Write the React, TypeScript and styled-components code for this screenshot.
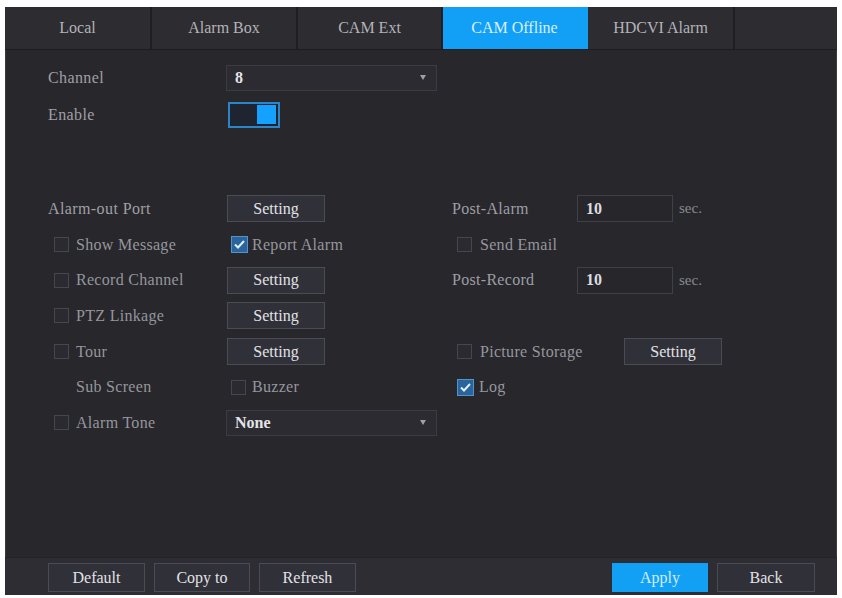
import React from "react";
import styled, { createGlobalStyle, css } from "styled-components";

const Global = createGlobalStyle`
  html, body { margin: 0; padding: 0; background: #ffffff; }
  body { font-family: "Liberation Serif", "Times New Roman", serif; }
`;

const Panel = styled.div`
  margin: 7px 0 0 5px;
  width: 832px;
  height: 588px;
  background: #27272c;
  display: flex;
  flex-direction: column;
  box-shadow: inset 0 0 0 1px #3a3a40;
`;

const TabBar = styled.div`
  display: flex;
  height: 42px;
  background: #2c2c31;
  border-bottom: 1px solid #1d1d21;
  flex: 0 0 auto;
`;

const Tab = styled.div<{ $active?: boolean; $w: number }>`
  width: ${(p) => p.$w}px;
  display: flex;
  align-items: center;
  justify-content: center;
  font-size: 16px;
  color: #b3b3b8;
  border-right: 2px solid #1f1f23;
  box-sizing: border-box;
  ${(p) =>
    p.$active &&
    css`
      background: #11a0f6;
      color: #dcefff;
      border-right-color: #11a0f6;
    `}
`;

const Filler = styled.div`
  flex: 1;
`;

const Content = styled.div`
  flex: 1;
  padding: 9px 0 0 43px;
`;

const FormGrid = styled.div`
  display: grid;
  grid-template-columns: 178px 226px 1fr;
  grid-template-rows: 37px 37px 58px repeat(7, 35.7px);
  align-items: center;
`;

const Label = styled.div`
  font-size: 16px;
  letter-spacing: 0.4px;
  color: #a0a0a6;
`;

const Cell = styled.div<{ $offset?: number }>`
  display: flex;
  align-items: center;
  padding-left: ${(p) => p.$offset ?? 0}px;
`;

const Spacer = styled.div`
  grid-column: 1 / -1;
`;

const Select = styled.div<{ $w: number }>`
  width: ${(p) => p.$w}px;
  height: 26px;
  box-sizing: border-box;
  background: #2b2b31;
  border: 1px solid #3b3b43;
  display: flex;
  align-items: center;
  justify-content: space-between;
  padding: 0 8px 0 8px;
  font-size: 16px;
  font-weight: bold;
  color: #e4e4e8;
`;

const Arrow = styled.span`
  width: 0;
  height: 0;
  border-left: 3.5px solid transparent;
  border-right: 3.5px solid transparent;
  border-top: 5px solid #9fa0a6;
  margin-right: 2px;
`;

const Toggle = styled.div`
  margin-left: 2px;
  width: 52px;
  height: 26px;
  box-sizing: border-box;
  border: 2px solid #2a86c8;
  background: #1f2530;
  display: flex;
  justify-content: flex-end;
  align-items: center;
  padding-right: 2px;
`;

const Knob = styled.div`
  width: 19px;
  height: 19px;
  background: #14a1ff;
`;

const Button = styled.div<{ $w?: number; $primary?: boolean }>`
  width: ${(p) => p.$w ?? 98}px;
  height: 27px;
  box-sizing: border-box;
  display: flex;
  align-items: center;
  justify-content: center;
  font-size: 16px;
  color: #e2e2e6;
  background: #303038;
  border: 1px solid #4a4b54;
  ${(p) =>
    p.$primary &&
    css`
      background: #12a0f5;
      border-color: #12a0f5;
      color: #d2ecff;
    `}
`;

const Box = styled.span<{ $checked?: boolean; $hidden?: boolean }>`
  width: 15px;
  height: 15px;
  box-sizing: border-box;
  border: 1px solid #46464e;
  background: #2a2a30;
  display: inline-flex;
  align-items: center;
  justify-content: center;
  flex: 0 0 auto;
  visibility: ${(p) => (p.$hidden ? "hidden" : "visible")};
  ${(p) =>
    p.$checked &&
    css`
      width: 17px;
      height: 17px;
      background: #2a649c;
      border-color: #5592c8;
    `}
`;

const CheckLabel = styled.span<{ $gap: number }>`
  margin-left: ${(p) => p.$gap}px;
  font-size: 16px;
  letter-spacing: 0.3px;
  color: #96969c;
`;

const Input = styled.div`
  width: 96px;
  height: 27px;
  box-sizing: border-box;
  background: #26262b;
  border: 1px solid #404048;
  display: flex;
  align-items: center;
  padding-left: 8px;
  font-size: 16px;
  font-weight: bold;
  color: #dcdce0;
`;

const Unit = styled.span`
  margin-left: 6px;
  font-size: 15px;
  color: #8a8a90;
`;

const RightLabel = styled.span`
  width: 125px;
  font-size: 16px;
  letter-spacing: 0.3px;
  color: #9e9ea4;
`;

const Footer = styled.div`
  flex: 0 0 auto;
  height: 38px;
  box-sizing: border-box;
  background: #2d2d33;
  border-top: 1px solid #232328;
  display: flex;
  align-items: flex-start;
  padding: 5px 22px 0 43px;
`;

const FooterGroup = styled.div<{ $gap: number }>`
  display: flex;
  gap: ${(p) => p.$gap}px;
`;

const FooterButton = styled(Button)`
  height: 29px;
`;

const CheckGroup = styled.div<{ $w?: number }>`
  display: flex;
  align-items: center;
  width: ${(p) => (p.$w ? `${p.$w}px` : "auto")};
`;

type CheckProps = {
  label: string;
  checked?: boolean;
  hidden?: boolean;
  gap?: number;
};

const Check: React.FC<CheckProps> = ({ label, checked, hidden, gap = 7 }) => (
  <>
    <Box $checked={checked} $hidden={hidden}>
      {checked && (
        <svg width="11" height="9" viewBox="0 0 11 9">
          <path d="M1 4.5 L4 7.5 L10 1" fill="none" stroke="#e0effc" strokeWidth="2" />
        </svg>
      )}
    </Box>
    <CheckLabel $gap={gap}>{label}</CheckLabel>
  </>
);

const tabs = [
  { name: "Local", w: 147 },
  { name: "Alarm Box", w: 146 },
  { name: "CAM Ext", w: 145 },
  { name: "CAM Offline", w: 145, active: true },
  { name: "HDCVI Alarm", w: 147 },
];

export default function App() {
  return (
    <>
      <Global />
      <Panel>
        <TabBar>
          {tabs.map((t) => (
            <Tab key={t.name} $w={t.w} $active={t.active}>
              {t.name}
            </Tab>
          ))}
          <Filler />
        </TabBar>
        <Content>
          <FormGrid>
            <Label>Channel</Label>
            <Cell>
              <Select $w={211}>
                <span>8</span>
                <Arrow />
              </Select>
            </Cell>
            <div />

            <Label>Enable</Label>
            <Cell>
              <Toggle>
                <Knob />
              </Toggle>
            </Cell>
            <div />

            <Spacer />

            <Label>Alarm-out Port</Label>
            <Cell $offset={1}>
              <Button>Setting</Button>
            </Cell>
            <Cell>
              <RightLabel>Post-Alarm</RightLabel>
              <Input>10</Input>
              <Unit>sec.</Unit>
            </Cell>

            <Cell $offset={6}>
              <Check label="Show Message" />
            </Cell>
            <Cell $offset={5}>
              <Check label="Report Alarm" checked gap={4} />
            </Cell>
            <Cell $offset={5}>
              <Check label="Send Email" gap={8} />
            </Cell>

            <Cell $offset={6}>
              <Check label="Record Channel" />
            </Cell>
            <Cell $offset={1}>
              <Button>Setting</Button>
            </Cell>
            <Cell>
              <RightLabel>Post-Record</RightLabel>
              <Input>10</Input>
              <Unit>sec.</Unit>
            </Cell>

            <Cell $offset={6}>
              <Check label="PTZ Linkage" />
            </Cell>
            <Cell $offset={1}>
              <Button>Setting</Button>
            </Cell>
            <div />

            <Cell $offset={6}>
              <Check label="Tour" />
            </Cell>
            <Cell $offset={1}>
              <Button>Setting</Button>
            </Cell>
            <Cell $offset={5}>
              <CheckGroup $w={167}>
                <Check label="Picture Storage" gap={8} />
              </CheckGroup>
              <Button>Setting</Button>
            </Cell>

            <Cell $offset={6}>
              <Check label="Sub Screen" hidden />
            </Cell>
            <Cell $offset={5}>
              <Check label="Buzzer" gap={6} />
            </Cell>
            <Cell $offset={5}>
              <Check label="Log" checked gap={5} />
            </Cell>

            <Cell $offset={6}>
              <Check label="Alarm Tone" />
            </Cell>
            <Cell>
              <Select $w={211}>
                <span>None</span>
                <Arrow />
              </Select>
            </Cell>
            <div />
          </FormGrid>
        </Content>
        <Footer>
          <FooterGroup $gap={9}>
            <FooterButton $w={97}>Default</FooterButton>
            <FooterButton $w={96}>Copy to</FooterButton>
            <FooterButton $w={97}>Refresh</FooterButton>
          </FooterGroup>
          <Filler />
          <FooterGroup $gap={9}>
            <FooterButton $w={96} $primary>
              Apply
            </FooterButton>
            <FooterButton $w={98}>Back</FooterButton>
          </FooterGroup>
        </Footer>
      </Panel>
    </>
  );
}
